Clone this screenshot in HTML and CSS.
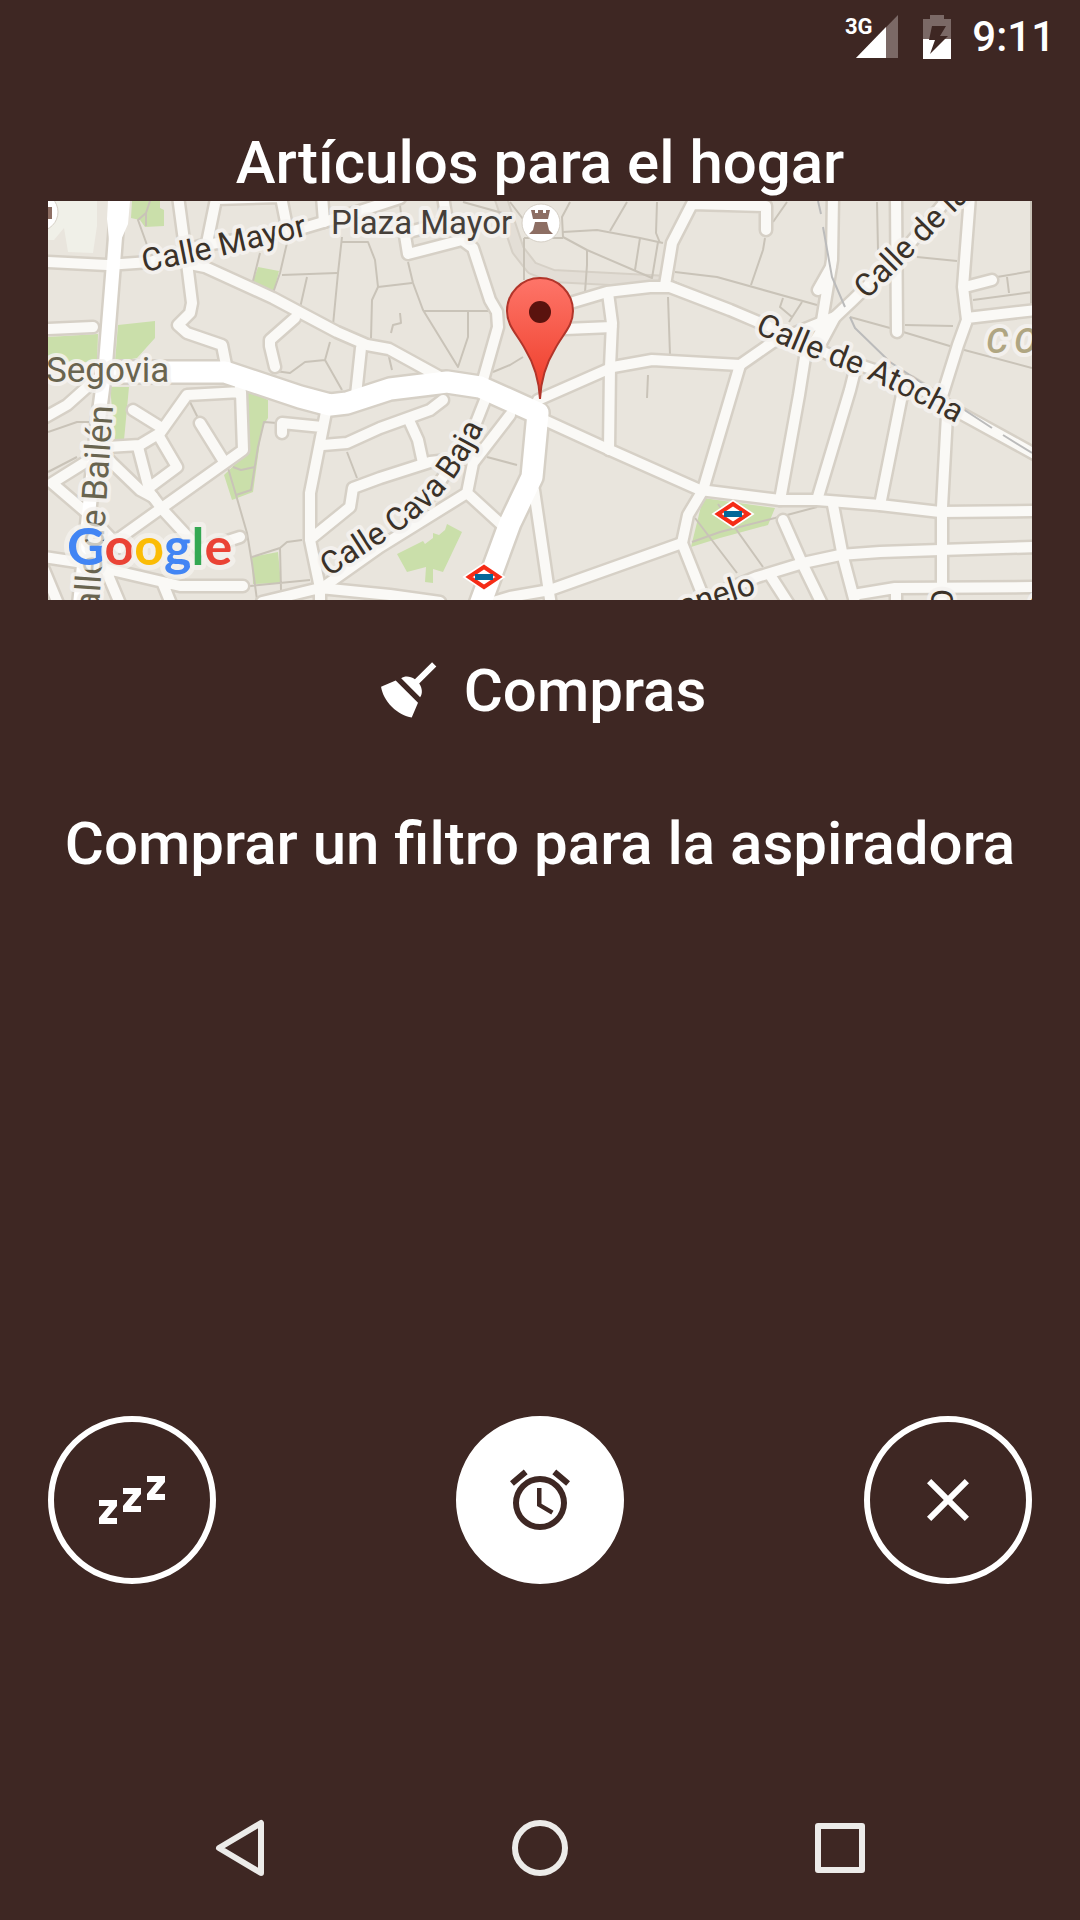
FILE: index.html
```html
<!DOCTYPE html>
<html lang="es">
<head>
<meta charset="utf-8">
<meta name="viewport" content="width=device-width, initial-scale=1">
<title>Artículos para el hogar</title>
<link rel="stylesheet" href="styles.css">
</head>
<body>
<header class="status-bar">
  <svg class="signal" viewBox="0 0 54 48" role="img" aria-label="Señal 3G">
    <path class="dim" d="M54 2V45H12z"/>
    <path class="lit" d="M42 14V45H12z"/>
    <text class="network" x="1" y="21">3G</text>
  </svg>
  <svg class="battery" viewBox="0 0 30 48" role="img" aria-label="Batería cargando">
    <path class="dim" d="M1 6H8V2H22V6H29V26H1z"/>
    <path class="lit" d="M1 26H29V46H1z"/>
    <path class="bolt" d="M10 13H24L18 23H26L8 41L13 27H7z"/>
  </svg>
  <time class="clock">9:11</time>
</header>

<main class="reminder">
  <h1 class="heading">Artículos para el hogar</h1>

  <svg class="map" viewBox="48 201 984 399" role="img" aria-label="Mapa de Google">
    <defs>
      <linearGradient id="pin-fill" x1="0" y1="0" x2="0" y2="1">
        <stop offset="0" stop-color="#fe7569"/>
        <stop offset="0.85" stop-color="#f04330"/>
      </linearGradient>
      <path id="path-mayor" d="M144 272L204 260L310 235"/>
      <path id="path-atocha" d="M754 332Q798 353 838 367T956 423"/>
      <path id="path-cava" d="M329 577L385 541Q422 517 445 490T491 411"/>
      <g id="streets">
        <path d="M48 262L107 265L150 262L200 246L300 229L357 212L400 198"/>
        <path d="M178 196L187 263L192 303L190 313L178 325L187 333L222 345L226 365"/>
        <path d="M207 243L216 199L281 197L287 227M322 196L324 222"/>
        <path d="M190 264L205 267L273 298L337 332L367 345L389 349L440 377"/>
        <path d="M295 318L270 340V346L275 367M361 348L356 395M48 329L93 327"/>
        <path d="M403 223L408 254L462 240L473 248L490 300L497 312L498 327L483 380M405 233L447 222L443 196"/>
        <path d="M570 303L607 292L650 287L670 287L730 310L770 327L830 355L910 382L960 413L1040 457"/>
        <path d="M665 285L672 243L692 204L766 206V230"/>
        <path d="M608 293L612 323L610 367L609 450M565 329L612 327"/>
        <path d="M538 400L613 367L652 360L740 365L773 342L835 317"/>
        <path d="M740 365L703 490L688 515L682 543L707 606"/>
        <path d="M833 196L832 260L820 333L805 357L799 395L780 500M831 267L818 290"/>
        <path d="M820 345L835 317L853 300L907 247L950 196"/>
        <path d="M855 370L850 390L817 500M903 390L880 505M896 196L897 332"/>
        <path d="M970 196L963 287L967 320L958 345L943 393M947 415L942 507V606M965 287L992 280M967 318L1036 310"/>
        <path d="M540 418L610 450L700 490L780 500L817 500L880 505L940 512L1036 511"/>
        <path d="M480 606L510 597L550 590L682 543M534 490L551 606"/>
        <path d="M510 415L473 463L467 493L502 525M485 400L470 438L422 508M467 493L380 547L322 588"/>
        <path d="M323 445L347 443L380 428L430 410L443 400M408 418L418 440L423 463"/>
        <path d="M475 457L430 462L380 478L353 488L350 507L313 537"/>
        <path d="M326 412L310 493L310 540L320 588V606M322 427L282 423V433M262 602L320 588L390 595L440 602"/>
        <path d="M44 418L67 405L95 380M107 447L140 445L160 433L187 395L241 392L243 450L163 507L107 547M240 380V395"/>
        <path d="M133 410L162 428M160 438L177 467L150 487M138 447L150 493L163 510L200 550L240 537"/>
        <path d="M200 423L223 460M100 450L112 463L140 490L153 497M108 448L52 483L87 513L120 548"/>
        <path d="M44 557L77 562L163 582L180 586L243 586M105 568L121 606M163 584L172 606M44 570L59 606"/>
        <path d="M725 590L757 577L803 563L840 555L880 552L940 550L1036 547"/>
        <path d="M783 520L802 563L823 606M833 505L843 557L856 606M770 575L790 606M853 595L895 588L1036 587M896 590V606"/>
      </g>
    </defs>

    <path class="land" d="M48 201H1032V600H48z"/>
    <path class="building" d="M60 201H97V226L93 253L68 252L64 228L54 240H48V201z"/>

    <g class="park">
      <path d="M132 201H160V208L164 210V226L145 227L140 220L131 218z"/>
      <path d="M258 267L279 271L273 296L251 287z"/>
      <path d="M118 325L155 321V338L137 358L115 362zM48 337L98 334L97 362H48z"/>
      <path d="M110 387H129L124 440H115z"/>
      <path d="M247 390L268 400V418L262 427L253 492L232 500L224 475L250 450z"/>
      <path d="M252 557L278 552L281 583L253 584z"/>
      <path d="M397 554L423 541L425 544L433 538V533L439 535L445 530L447 524L462 532L443 572L433 569V583L425 582L426 567L407 572z"/>
      <path d="M703 498L775 508L768 525L720 538L691 547z"/>
    </g>

    <path class="plaza-edge" d="M500 196L518 250L532 268L553 276L668 282"/>
    <path class="plaza" d="M500 196L518 250L532 268L553 276L668 282"/>

    <g class="lane">
      <path d="M150 201L146 213L138 220L147 245M146 213V226M260 253L252 285M287 243L280 273L273 293M282 275L337 273M307 277L300 308"/>
      <path d="M342 237L338 273L333 325M342 242H368L375 260L378 287L372 300L371 338M378 287L412 283M330 342L325 360L305 362L290 373L275 371M325 360L342 390"/>
      <path d="M400 205L402 223M408 262L413 283L423 310L458 367L468 337V311M423 311H488M493 372L510 365L523 357M400 313L401 323L393 325L391 333M389 357L392 370"/>
      <path d="M463 202L513 216M510 202L523 219M524 238V280M524 238H563M563 237L587 250L652 278L658 242M563 232L597 230L640 238L663 243M570 202L562 217L563 237"/>
      <path d="M627 202L610 231M657 202L656 233L660 243M640 238L635 270M587 250V265L585 292M668 297L670 355M675 272L717 277L817 305M670 280L730 306"/>
      <path d="M850 317L890 328L953 347L1032 368M648 375L647 398M787 202L773 222M765 238L763 250L751 285M783 298L780 307L792 317M802 302L789 322"/>
      <path d="M877 202L878 250M917 257L957 261M905 325L953 326M973 300L1032 292M997 277L1032 271M1007 277L1009 293M1031 201V310"/>
      <path d="M48 432L77 422H95M48 472L77 457M190 402L198 418M277 423L264 422L258 447L251 490L236 495L228 468M236 495L247 533L252 563L257 600M233 467L241 470L255 467"/>
      <path d="M252 557L280 548L287 542L302 540M280 548L281 590M250 586L310 580M347 452L357 478M487 457L517 465"/>
      <path d="M695 518L737 573M718 504L763 567M692 542L720 532L787 515L817 507M787 515L775 518"/>
    </g>

    <use href="#streets" class="street-edge"/>
    <path class="avenue-edge wide" d="M95 372H225L300 397L330 405L347 403L390 389L447 382L480 387L538 413L532 477L510 523L478 610"/>
    <path class="avenue-edge narrow" d="M119 190L114 257L105 370L98 423L90 500L79 610"/>
    <use href="#streets" class="street"/>
    <path class="avenue narrow" d="M119 190L114 257L105 370L98 423L90 500L79 610"/>
    <path class="avenue wide" d="M95 372H225L300 397L330 405L347 403L390 389L447 382L480 387L538 413L532 477L510 523L478 610"/>
    <path class="avenue-top" d="M108 201H130L128 224L121 240H109L107 219z"/>

    <path class="rail" d="M818 201L821 214M823 227L832 277L845 307M850 317L855 328L890 362L928 387M963 409L992 428M1003 435L1032 453"/>

    <g class="place">
      <text><textPath href="#path-mayor">Calle Mayor</textPath></text>
      <text><textPath href="#path-atocha">Calle de Atocha</textPath></text>
      <text><textPath href="#path-cava">Calle Cava Baja</textPath></text>
      <text transform="translate(867 300) rotate(-45)">Calle de la</text>
      <text transform="translate(757 593) rotate(-18)" text-anchor="end">anelo</text>
      <text transform="translate(953 611) rotate(-90)">O</text>
      <text x="1029" y="616">C</text>
      <text class="olive" x="46" y="382">Segovia</text>
      <text class="olive" transform="translate(113 406) rotate(-86)" text-anchor="end">Calle de Bailén</text>
      <text class="poi" x="331" y="234">Plaza Mayor</text>
      <text class="district" x="986 1014" y="353">CO</text>
    </g>

    <circle class="badge" cx="39" cy="212" r="19"/>
    <path class="badge-icon" d="M48 207H52V219H48z"/>
    <circle class="badge" cx="541" cy="223" r="19"/>
    <path class="badge-icon" d="M531 210H535V213H538V210H543V213H546V210H550L548 219H533zM535 222H547L549 230L553 234H529L533 230z"/>

    <g class="metro" transform="translate(484 577)">
      <path class="metro-halo" d="M-18 0L0 -12L18 0L0 12z"/>
      <path class="metro-sign" d="M-15 0L0 -10L15 0L0 10z"/>
      <path class="metro-bar" d="M-9 -3H9V3H-9z"/>
    </g>
    <g class="metro" transform="translate(733 514)">
      <path class="metro-halo" d="M-18 0L0 -12L18 0L0 12z"/>
      <path class="metro-sign" d="M-15 0L0 -10L15 0L0 10z"/>
      <path class="metro-bar" d="M-9 -3H9V3H-9z"/>
    </g>

    <path class="pin" d="M540 399C539 380 533 362 525 349C517 334 507 326 507 311A33 33 0 0 1 573 311C573 326 563 334 555 349C547 362 541 380 540 399z"/>
    <circle class="pin-dot" cx="540" cy="312" r="11"/>

    <text class="brand" x="67" y="565"><tspan class="blue">G</tspan><tspan class="red">o</tspan><tspan class="yellow">o</tspan><tspan class="blue">g</tspan><tspan class="green">l</tspan><tspan class="red">e</tspan></text>
  </svg>

  <p class="category">
    <svg class="icon" viewBox="0 0 24 24" aria-hidden="true"><path d="M19.36,2.72L20.78,4.14L15.06,9.85C16.13,11.39 16.28,13.24 15.38,14.44L9.06,8.12C10.26,7.22 12.11,7.37 13.65,8.44L19.36,2.72M5.93,17.57C3.92,15.56 2.69,13.16 2.35,10.92L7.23,8.83L14.67,16.27L12.58,21.15C10.34,20.81 7.94,19.58 5.93,17.57Z"/></svg>
    <span>Compras</span>
  </p>

  <p class="note">Comprar un filtro para la aspiradora</p>

  <div class="actions">
    <button class="action" type="button" aria-label="Posponer">
      <svg class="icon" viewBox="0 0 24 24" aria-hidden="true"><path d="M1 12h6v2L3.67 18H7v2H1v-2l3.33-4H1zM9 8h6v2l-3.33 4H15v2H9v-2l3.33-4H9zM17 4h6v2l-3.33 4H23v2h-6v-2l3.33-4H17z"/></svg>
    </button>
    <button class="action primary" type="button" aria-label="Alarma">
      <svg class="icon" viewBox="0 0 24 24" aria-hidden="true"><path d="M12,20A7,7 0 0,1 5,13A7,7 0 0,1 12,6A7,7 0 0,1 19,13A7,7 0 0,1 12,20M12,4A9,9 0 0,0 3,13A9,9 0 0,0 12,22A9,9 0 0,0 21,13A9,9 0 0,0 12,4M12.5,8H11V14L15.75,16.85L16.5,15.62L12.5,13.25V8M7.88,3.39L6.6,1.86L2,5.71L3.29,7.24L7.88,3.39M22,5.72L17.4,1.86L16.11,3.39L20.71,7.25L22,5.72Z"/></svg>
    </button>
    <button class="action" type="button" aria-label="Descartar">
      <svg class="icon" viewBox="0 0 24 24" aria-hidden="true"><path d="M19,6.41L17.59,5L12,10.59L6.41,5L5,6.41L10.59,12L5,17.59L6.41,19L12,13.41L17.59,19L19,17.59L13.41,12L19,6.41Z"/></svg>
    </button>
  </div>
</main>

<nav class="nav-bar" aria-label="Sistema">
  <button class="nav-button" type="button" aria-label="Atrás">
    <svg viewBox="0 0 60 60" aria-hidden="true"><path d="M51 5V55L9 30z"/></svg>
  </button>
  <button class="nav-button" type="button" aria-label="Inicio">
    <svg viewBox="0 0 60 60" aria-hidden="true"><circle cx="30" cy="30" r="25"/></svg>
  </button>
  <button class="nav-button" type="button" aria-label="Recientes">
    <svg viewBox="0 0 60 60" aria-hidden="true"><path d="M8 8H52V52H8z"/></svg>
  </button>
</nav>
</body>
</html>
```
FILE: styles.css
```css
* {
  box-sizing: border-box;
}

body {
  display: flex;
  flex-direction: column;
  min-height: 100vh;
  margin: 0;
  background: #3e2723;
  color: #fff;
  font-family: Roboto, "Noto Sans", sans-serif;
}

button {
  display: flex;
  align-items: center;
  justify-content: center;
  padding: 0;
  border: 0;
  background: none;
  color: inherit;
}

/* Status bar */
.status-bar {
  display: flex;
  align-items: center;
  justify-content: flex-end;
  height: 72px;
  padding: 2px 25px 0;
}

.signal {
  width: 54px;
  height: 48px;
}

.battery {
  width: 30px;
  height: 48px;
  margin: 0 20px 0 24px;
}

.dim {
  fill: #7b6966;
}

.lit {
  fill: #fff;
}

.bolt {
  fill: #3e2723;
}

.network {
  fill: #fff;
  font-size: 22px;
  font-weight: 700;
}

.clock {
  font-size: 42px;
  font-weight: 500;
  line-height: 48px;
}

/* Reminder */
.reminder {
  display: flex;
  flex: 1;
  flex-direction: column;
  padding: 55px 48px 192px;
}

.heading,
.category,
.note {
  margin: 0;
  font-size: 60px;
  font-weight: 500;
  line-height: 74px;
  text-align: center;
}

.heading {
  line-height: 72px;
  padding-bottom: 2px;
}

.category {
  display: flex;
  justify-content: center;
  gap: 18px;
  margin-top: 54px;
}

.note {
  margin-top: 79px;
}

.icon {
  width: 72px;
  height: 72px;
  fill: currentColor;
}

.actions {
  display: flex;
  justify-content: space-between;
  margin-top: auto;
}

.action {
  width: 168px;
  height: 168px;
  border: 6px solid #fff;
  border-radius: 50%;
}

.primary {
  background: #fff;
  color: #3e2723;
}

/* Map */
.map {
  display: block;
  width: 100%;
  overflow: hidden;
}

.land {
  fill: #e9e5dd;
}

.building {
  fill: #f0f0e8;
}

.park {
  fill: #cadfaa;
}

.plaza-edge,
.plaza,
.lane,
.rail,
.street,
.street-edge,
.avenue,
.avenue-edge {
  fill: none;
  stroke-linejoin: round;
}

.plaza-edge {
  stroke: #d6d0c6;
  stroke-width: 14px;
}

.plaza {
  stroke: #e3ded6;
  stroke-width: 10px;
}

.lane {
  stroke: #c9c3b8;
  stroke-width: 2px;
}

.rail {
  stroke: #bbbbbb;
  stroke-width: 2px;
}

.street,
.street-edge {
  stroke-linecap: round;
}

.street-edge {
  stroke: #d6d0c6;
  stroke-width: 15px;
}

.street {
  stroke: #faf9f6;
  stroke-width: 10px;
}

.avenue {
  stroke: #fff;
}

.avenue-top {
  fill: #fff;
}

.avenue-edge {
  stroke: #d6d0c6;
}

.avenue.wide {
  stroke-width: 21px;
}

.avenue-edge.wide {
  stroke-width: 26px;
}

.avenue.narrow {
  stroke-width: 13px;
}

.avenue-edge.narrow {
  stroke-width: 18px;
}

.place {
  fill: #3a3128;
  font-size: 32px;
  paint-order: stroke;
  stroke: rgba(245, 243, 240, 0.85);
  stroke-linejoin: round;
  stroke-width: 8px;
}

.olive {
  fill: #69644f;
  font-size: 35px;
}

.poi {
  fill: #453f3a;
  font-size: 33px;
}

.district {
  fill: #b0a682;
  font-size: 35px;
  font-style: italic;
  font-weight: 500;
}

.badge {
  fill: #fff;
  stroke: #d6d0c6;
}

.badge-icon {
  fill: #8d6e63;
}

.metro-halo {
  fill: #fff;
  stroke: #fff;
  stroke-width: 4px;
}

.metro-sign {
  fill: #fff;
  stroke: #f52c17;
  stroke-width: 4px;
}

.metro-bar {
  fill: #046799;
}

.pin {
  fill: url(#pin-fill);
  stroke: #b1352a;
  stroke-width: 2px;
}

.pin-dot {
  fill: #5a130e;
}

.brand {
  font-family: Lato, sans-serif;
  font-size: 52px;
  font-weight: 700;
  paint-order: stroke;
  stroke: rgba(245, 243, 240, 0.7);
  stroke-linejoin: round;
  stroke-width: 10px;
}

.blue {
  fill: #4285f4;
}

.red {
  fill: #ea4335;
}

.yellow {
  fill: #fbbc05;
}

.green {
  fill: #34a853;
}

/* Navigation bar */
.nav-bar {
  display: flex;
  align-items: center;
  justify-content: center;
  gap: 60px;
  height: 144px;
}

.nav-button {
  width: 240px;
  height: 144px;
}

.nav-button svg {
  width: 60px;
  height: 60px;
  fill: none;
  stroke: #ecebe9;
  stroke-linejoin: round;
  stroke-width: 6px;
}
```
